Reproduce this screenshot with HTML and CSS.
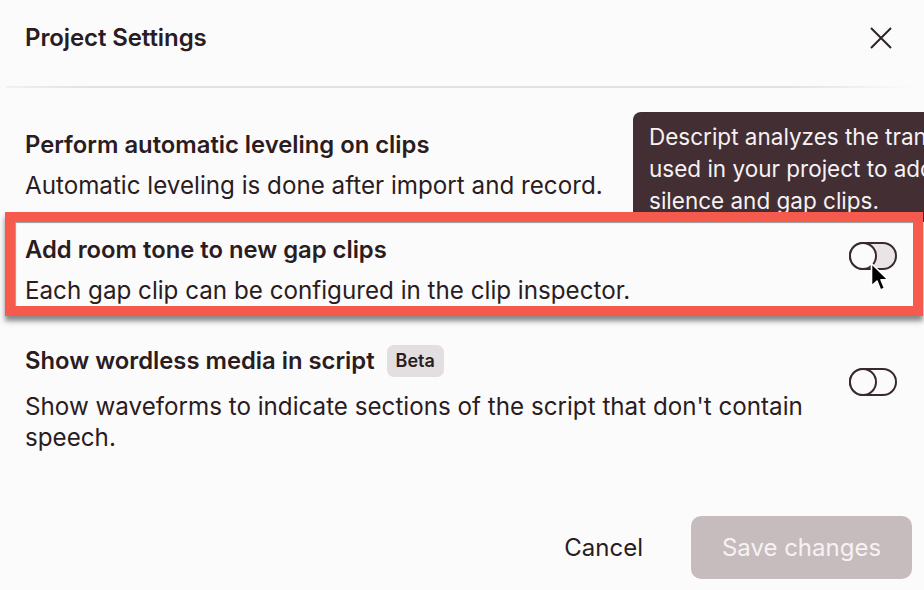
FILE: index.html
```html
<!DOCTYPE html>
<html lang="en">
<head>
<meta charset="utf-8">
<title>Project Settings</title>
<link rel="stylesheet" href="styles.css">
</head>
<body>
<div class="dialog">
  <header class="header">
    <h1 class="title">Project Settings</h1>
    <button class="close" aria-label="Close">
      <svg width="22" height="22" viewBox="0 0 22 22"><path d="M1 1 L21 21 M21 1 L1 21" stroke="#2e2226" stroke-width="2" fill="none"/></svg>
    </button>
  </header>
  <div class="divider"></div>

  <div class="content">
    <div class="row row-first">
      <div class="text">
        <div class="row-title">Perform automatic leveling on clips</div>
        <div class="row-desc">Automatic leveling is done after import and record.</div>
      </div>
    </div>

    <div class="tooltip">Descript analyzes the transcript<br>used in your project to add<br>silence and gap clips.</div>

    <div class="row row-highlight">
      <div class="text">
        <div class="row-title">Add room tone to new gap clips</div>
        <div class="row-desc">Each gap clip can be configured in the clip inspector.</div>
      </div>
      <div class="toggle toggle-hover toggle-top"><span class="knob"></span></div>
    </div>

    <div class="row row-last">
      <div class="text">
        <div class="row-title">Show wordless media in script <span class="badge">Beta</span></div>
        <div class="row-desc wide">Show waveforms to indicate sections of the script that don't contain speech.</div>
      </div>
      <div class="toggle toggle-mid"><span class="knob"></span></div>
    </div>

    <svg class="cursor" width="20" height="32" viewBox="0 0 20 32"><path d="M1.5 1.5 L1.5 24 L7 19 L10.5 28 L14.5 26.3 L11 17.8 L18 17.8 Z" fill="#000" stroke="#fff" stroke-width="1.6" stroke-linejoin="round"/></svg>
  </div>

  <footer class="footer">
    <button class="btn-cancel">Cancel</button>
    <button class="btn-save">Save changes</button>
  </footer>
</div>
</body>
</html>
```

FILE: styles.css
```css
* { box-sizing: border-box; }
html, body {
  margin: 0;
  padding: 0;
  width: 924px;
  height: 590px;
  overflow: hidden;
  background: #fcfbfb;
  font-family: Inter, "Noto Sans", sans-serif;
  color: #2a1c21;
}
.dialog {
  display: flex;
  flex-direction: column;
  height: 590px;
}
.header {
  display: flex;
  justify-content: space-between;
  align-items: flex-start;
  height: 86px;
  padding: 23px 32px 0 25px;
}
.title {
  margin: 0;
  font-size: 24px;
  line-height: 30px;
  font-weight: 600;
  letter-spacing: -0.1px;
}
.close {
  border: 0;
  background: none;
  padding: 0;
  margin-top: 4px;
  width: 22px;
  height: 22px;
}
.close svg { display: block; }
.divider {
  height: 2px;
  margin: 0 6px;
  background: linear-gradient(90deg, rgba(220,214,215,0.3), #e4dfe0 10%, #e4dfe0 85%, rgba(228,223,224,0));
}
.content {
  position: relative;
  padding-top: 42px;
  flex: 1;
}
.row {
  display: flex;
  justify-content: space-between;
  align-items: flex-start;
  padding: 0 27px 0 25px;
}
.row-title {
  font-size: 23.8px;
  line-height: 30px;
  font-weight: 600;
  display: flex;
  align-items: center;
}
.row-desc {
  font-size: 24.2px;
  line-height: 31px;
  margin-top: 10px;
}
.row-desc.wide { max-width: 800px; }
.row-highlight {
  position: relative;
  z-index: 2;
  margin: 11px 1px 0 5px;
  border: 10px solid #f55a4c;
  padding: 13px 16px 0 10px;
  height: 104px;
  background: #fcfbfb;
  box-shadow: 0 5px 5px rgba(40,40,40,0.55), inset 1px 1px 1px rgba(90,90,90,0.6);
}
.row-last { margin-top: 29px; }
.row-last .row-desc { margin-top: 14px; }
.badge {
  display: inline-block;
  margin-left: 12px;
  background: #e3dedf;
  border-radius: 7px;
  font-size: 18px;
  font-weight: 600;
  line-height: 32px;
  padding: 0 9px;
}
.toggle {
  position: relative;
  flex: none;
  width: 48px;
  height: 28px;
  border: 2px solid #3a2a2f;
  border-radius: 14px;
  background: #fcfbfb;
}
.toggle-hover { background: #e9e5e6; }
.toggle-top { margin-top: 7px; }
.toggle-mid { margin-top: 23px; }
.knob {
  position: absolute;
  left: -2px;
  top: -2px;
  width: 28px;
  height: 28px;
  border: 2px solid #3a2a2f;
  border-radius: 50%;
  background: #fcfbfb;
}
.tooltip {
  position: absolute;
  left: 633px;
  top: 24px;
  width: 420px;
  height: 110px;
  background: #432e33;
  color: #f6f2f3;
  border-radius: 8px 0 0 8px;
  padding: 9px 16px;
  font-size: 22.5px;
  line-height: 32px;
  white-space: nowrap;
  z-index: 1;
}
.cursor {
  position: absolute;
  left: 870px;
  top: 174px;
  z-index: 3;
}
.footer {
  display: flex;
  justify-content: flex-end;
  align-items: center;
  gap: 48px;
  padding: 0 12px 11px 0;
}
.btn-cancel {
  border: 0;
  background: none;
  font-family: Inter, sans-serif;
  font-size: 24px;
  color: #2a1c21;
  padding: 0;
}
.btn-save {
  border: 0;
  width: 221px;
  height: 63px;
  border-radius: 10px;
  background: #c6bcbe;
  color: #f6f2f3;
  font-family: Inter, sans-serif;
  font-size: 24px;
}
```
